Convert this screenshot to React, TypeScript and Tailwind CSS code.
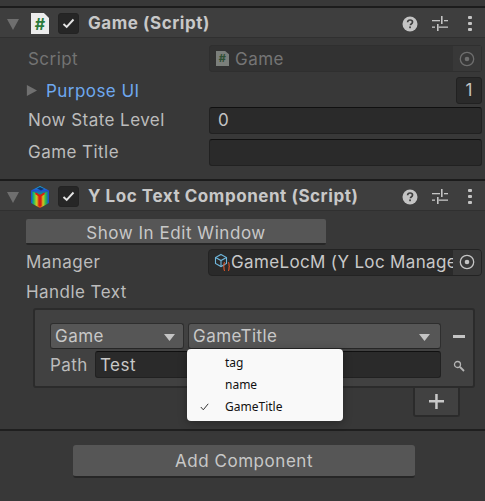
import React from 'react';

const font = "font-['Inter','Noto_Sans',sans-serif]";

function Caret({ open, className }: { open: boolean; className?: string }) {
  return (
    <svg width="14" height="14" viewBox="0 0 14 14" className={className}>
      {open ? <path d="M1 2h12L7 13z" fill="#6f6f6f" /> : <path d="M2 1l11 6-11 6z" fill="#707070" />}
    </svg>
  );
}

function HeaderIcons() {
  return (
    <div className="flex items-center gap-[14px] pr-[13px]">
      <svg width="16" height="16" viewBox="0 0 16 16">
        <circle cx="8" cy="8" r="7.5" fill="#c4c4c4" />
        <path d="M5.6 6.2C5.7 4.8 6.7 4 8.1 4c1.4 0 2.400.8 2.400 2 0 1-.6 1.500-1.300 2-.5.3-.7.6-.7 1.200" fill="none" stroke="#3e3e3e" strokeWidth="1.7" />
        <rect x="7.2" y="10.4" width="1.7" height="1.8" fill="#3e3e3e" />
      </svg>
      <svg width="16" height="16" viewBox="0 0 16 16" fill="#c4c4c4">
        <rect x="0" y="4" width="8" height="1.3" />
        <rect x="9" y="0" width="1.6" height="8" />
        <rect x="12" y="4" width="4" height="1.3" />
        <rect x="0" y="10.5" width="3" height="1.3" />
        <rect x="5" y="8" width="1.6" height="7" />
        <rect x="6.6" y="10.5" width="9.4" height="1.3" />
      </svg>
      <div className="ml-[6px] flex h-[15px] w-[4px] flex-col justify-between">
        <span className="h-[3px] w-[4px] rounded-[1px] bg-[#c4c4c4]" />
        <span className="h-[3px] w-[4px] rounded-[1px] bg-[#c4c4c4]" />
        <span className="h-[3px] w-[4px] rounded-[1px] bg-[#c4c4c4]" />
      </div>
    </div>
  );
}

function Toggle() {
  return (
    <div className="flex h-[21px] w-[21px] items-center justify-center rounded-[3px] border border-[#232323] bg-[#262626]">
      <svg width="13" height="11" viewBox="0 0 13 11">
        <path d="M1.500 6l3.200 3L11.500 1.500" fill="none" stroke="#e4e4e4" strokeWidth="1.9" />
      </svg>
    </div>
  );
}

function ScriptIcon({ small }: { small?: boolean }) {
  return (
    <div className={small
      ? "flex h-[15px] w-[13px] shrink-0 items-center justify-center bg-[#7b7f7b] text-[11px] font-bold leading-none text-[#2f4f33] [clip-path:polygon(0_0,70%_0,100%_22%,100%_100%,0_100%)]"
      : "flex h-[21px] w-[18px] items-center justify-center bg-[#ececec] text-[16px] font-bold leading-none text-[#2a7a3a] [clip-path:polygon(0_0,72%_0,100%_24%,100%_100%,0_100%)]"}>
      #
    </div>
  );
}

function CubeIcon() {
  return (
    <svg width="20" height="23" viewBox="0 0 20 23">
      <defs>
        <linearGradient id="cubeLeft" x1="0" y1="0" x2="1" y2="0">
          <stop offset="0" stopColor="#1a3fe0" />
          <stop offset="0.3" stopColor="#18c060" />
          <stop offset="0.6" stopColor="#c8c820" />
          <stop offset="1" stopColor="#e02818" />
        </linearGradient>
        <linearGradient id="cubeRight" x1="0" y1="0" x2="1" y2="0">
          <stop offset="0" stopColor="#e02818" />
          <stop offset="0.35" stopColor="#d0c020" />
          <stop offset="0.65" stopColor="#20b850" />
          <stop offset="1" stopColor="#1a3fe0" />
        </linearGradient>
        <linearGradient id="cubeTop" x1="0" y1="0" x2="0" y2="1">
          <stop offset="0" stopColor="#18b0d0" />
          <stop offset="0.5" stopColor="#1c50d8" />
          <stop offset="1" stopColor="#18a860" />
        </linearGradient>
      </defs>
      <path d="M10 10l-9-4.500v12.500L10 23z" fill="url(#cubeLeft)" />
      <path d="M10 10l9-4.500v12.500L10 23z" fill="url(#cubeRight)" />
      <path d="M10 1l9 4.500-9 4.500-9-4.500z" fill="url(#cubeTop)" />
      <path d="M6 7.500l4 2.500 4-2.500 1 1.500-3.500 2.200V21h-3v-9.800L5 9z" fill="#d81c14" />
      <path d="M7 3.500l3-1.500 4 2-3 1.500z" fill="#12346a" />
    </svg>
  );
}

function ManagerIcon() {
  return (
    <svg width="17" height="18" viewBox="0 0 17 18" fill="none">
      <path d="M7 1.500l5.500 3v6L7 13.500l-5.500-3v-6z" stroke="#6fb7dc" strokeWidth="1.100" />
      <path d="M1.500 4.500L7 7.500l5.500-3M7 7.500v6" stroke="#6fb7dc" strokeWidth="1.100" />
      <path d="M11 9.500c-1 0-1 .5-1 1.500v1.500c0 1-.5 1-.8 1 .3 0 .8 0 .8 1V16c0 1 0 1.500 1 1.500M14 9.500c1 0 1 .5 1 1.500v1.500c0 1 .5 1 .8 1-.3 0-.8 0-.8 1V16c0 1 0 1.500-1 1.500" stroke="#e0562a" strokeWidth="1.100" />
    </svg>
  );
}

function Target({ color }: { color: string }) {
  return (
    <svg width="16" height="16" viewBox="0 0 16 16">
      <circle cx="8" cy="8" r="6.700" fill="none" stroke={color} strokeWidth="1.300" />
      <circle cx="8" cy="8" r="2.300" fill={color} />
    </svg>
  );
}

function Header({ icon, title }: { icon: React.ReactNode; title: string }) {
  return (
    <div className="flex h-[32px] items-center border-t-2 border-b border-t-[#1c1c1c] border-b-[#303030] bg-[#3e3e3e] pt-[2px]">
      <Caret open className="ml-[6px]" />
      <div className="ml-[10px] flex w-[20px] justify-center">{icon}</div>
      <div className="ml-[8px]"><Toggle /></div>
      <div className="ml-[9px] flex-1 pt-px text-[17px] font-bold tracking-[0.55px] text-[#c8c8c8]">{title}</div>
      <HeaderIcons />
    </div>
  );
}

function Field({ children }: { children?: React.ReactNode }) {
  return (
    <div className="flex h-[27px] flex-1 items-center rounded-[3px] border border-[#212121] border-t-[#101010] bg-[#2a2a2a] pt-[2px] pl-[8px] text-[17px] tracking-[0.45px] text-[#c4c4c4]">
      {children}
    </div>
  );
}

function Label({ children }: { children: React.ReactNode }) {
  return <div className="w-[181px] pt-[2px] text-[17px] tracking-[0.45px] text-[#bcbcbc]">{children}</div>;
}

function Popup() {
  const items = [
    { label: 'tag', checked: false },
    { label: 'name', checked: false },
    { label: 'GameTitle', checked: true },
  ];
  return (
    <div className="absolute left-[187px] top-[349px] z-10 w-[156px] rounded-[4px] bg-[#f9f9f9] py-[3px] shadow-[0_2px_10px_rgba(0,0,0,0.3)]">
      {items.map((item) => (
        <div key={item.label} className="flex h-[22px] items-center">
          <div className="flex w-[38px] justify-start pl-[13px]">
            {item.checked && (
              <svg width="9" height="8" viewBox="0 0 9 8">
                <path d="M.8 4l2.500 2.800L8.200.8" fill="none" stroke="#333" strokeWidth="1" />
              </svg>
            )}
          </div>
          <span className="font-['Noto_Sans',sans-serif] text-[12px] text-[#111]">{item.label}</span>
        </div>
      ))}
    </div>
  );
}

export default function App() {
  return (
    <div className={`relative h-[501px] w-[485px] overflow-hidden bg-[#383838] ${font}`}>
      <div className="h-[6px]" />
      <Header icon={<ScriptIcon />} title="Game (Script)" />

      <div className="flex h-[141px] flex-col pt-[7px] pr-[3px] pl-[28px]">
        <div className="flex h-[27px] items-center">
          <div className="w-[181px] pt-[2px] text-[17px] tracking-[0.45px] text-[#737373]">Script</div>
          <div className="flex h-[27px] flex-1 items-center rounded-[3px] border border-[#2f2f2f] bg-[#323232] pl-[6px] text-[17px] tracking-[0.45px] text-[#757575]">
            <ScriptIcon small />
            <span className="ml-[6px] flex-1 pt-[2px]">Game</span>
            <div className="flex h-full w-[28px] items-center justify-center bg-[#383838]"><Target color="#6e6e6e" /></div>
          </div>
        </div>
        <div className="mt-[4px] flex h-[28px] items-center">
          <Caret open={false} className="-ml-[3px] h-[13px] w-[13px]" />
          <div className="ml-[8px] flex-1 pt-[4px] text-[17px] tracking-[0.45px] text-[#6ea8ef]">Purpose UI</div>
          <div className="flex h-[27px] w-[26px] items-center justify-center rounded-[3px] border border-[#212121] bg-[#2a2a2a] pt-[2px] text-[17px] text-[#c4c4c4]">1</div>
        </div>
        <div className="mt-[2px] flex h-[28px] items-center"><Label>Now State Level</Label><Field>0</Field></div>
        <div className="mt-[4px] flex h-[28px] items-center"><Label>Game Title</Label><Field /></div>
      </div>

      <Header icon={<CubeIcon />} title="Y Loc Text Component (Script)" />

      <div className="pt-[8px] pr-[3px] pl-[26px]">
        <button className="block h-[26px] w-[300px] rounded-[2px] border-b-2 border-b-[#262626] bg-[#565656] pt-[2px] text-center text-[17px] tracking-[0.55px] text-[#c8c8c8]">
          Show In Edit Window
        </button>
        <div className="mt-[3px] flex h-[28px] items-center">
          <div className="w-[182px] pt-[2px] text-[17px] tracking-[0.45px] text-[#bcbcbc]">Manager</div>
          <div className="flex h-[27px] min-w-0 flex-1 items-center overflow-hidden rounded-[4px] border border-[#232323] bg-[#2a2a2a] pl-[5px] text-[17px] text-[#c8c8c8]">
            <div className="shrink-0"><ManagerIcon /></div>
            <span className="w-[222px] shrink-0 overflow-hidden pt-[2px] tracking-[0.35px] whitespace-nowrap">GameLocM (Y Loc Manager)</span>
            <div className="flex h-full w-[28px] shrink-0 items-center justify-center bg-[#383838]"><Target color="#c4c4c4" /></div>
          </div>
        </div>
        <div className="mt-[2px] flex h-[28px] items-center"><Label>Handle Text</Label></div>

        {/* list box */}
        <div className="mt-[2px] mr-[7px] ml-[7px] flex h-[80px] rounded-[3px] border-2 border-[#2b2b2b] bg-[#414141] pt-[13px] pl-[15px]">
          <div>
            <div className="flex gap-[4px]">
              <div className="flex h-[26px] w-[134px] items-center justify-between rounded-[3px] border border-[#2e2e2e] border-b-[#262626] bg-[#565656] pt-[2px] pr-[8px] pl-[4px] text-[17px] tracking-[0.45px] text-[#c8c8c8]">
                Game
                <svg width="11" height="7" viewBox="0 0 11 7"><path d="M0 0h11L5.500 7z" fill="#c4c4c4" /></svg>
              </div>
              <div className="flex h-[26px] w-[253px] items-center justify-between rounded-[3px] border border-[#2e2e2e] border-b-[#262626] bg-[#565656] pt-[2px] pr-[10px] pl-[4px] text-[17px] tracking-[0.45px] text-[#c8c8c8]">
                GameTitle
                <svg width="11" height="7" viewBox="0 0 11 7"><path d="M0 0h11L5.500 7z" fill="#c4c4c4" /></svg>
              </div>
            </div>
            <div className="mt-[2px] flex h-[27px] items-center">
              <div className="w-[45px] pt-[2px] text-[17px] tracking-[0.45px] text-[#bcbcbc]">Path</div>
              <div className="flex h-[27px] w-[346px] items-center rounded-[3px] border border-[#212121] border-t-[#101010] bg-[#2a2a2a] pt-[2px] pl-[4px] text-[17px] tracking-[0.45px] text-[#c8c8c8]">Test</div>
            </div>
          </div>
          <div className="ml-[11px] flex w-[14px] flex-col items-center">
            <span className="mt-[12px] h-[3px] w-[12px] bg-[#c4c4c4]" />
            <svg width="12" height="12" viewBox="0 0 12 12" className="mt-[22px]">
              <circle cx="4.500" cy="4.500" r="3" fill="none" stroke="#b5b5b5" strokeWidth="1.300" />
              <path d="M7 7l4 4" stroke="#b5b5b5" strokeWidth="1.800" />
            </svg>
          </div>
        </div>

        <div className="mr-[22px] flex justify-end">
          <div className="flex h-[29px] w-[47px] items-center justify-center rounded-b-[3px] border-x-2 border-b-2 border-[#2b2b2b] bg-[#414141]">
            <svg width="15" height="15" viewBox="0 0 15 15" fill="#c8c8c8">
              <rect x="0" y="6" width="15" height="2.500" />
              <rect x="6.200" y="0" width="2.500" height="15" />
            </svg>
          </div>
        </div>
      </div>

      <div className="mt-[12px] h-[2px] bg-[#1f1f1f]" />
      <div className="mt-[14px] flex justify-start pl-[73px]">
        <button className="h-[33px] w-[342px] rounded-[3px] border-b-2 border-b-[#262626] bg-[#565656] pt-[2px] text-[17px] tracking-[0.55px] text-[#c8c8c8]">
          Add Component
        </button>
      </div>

      <Popup />
    </div>
  );
}
